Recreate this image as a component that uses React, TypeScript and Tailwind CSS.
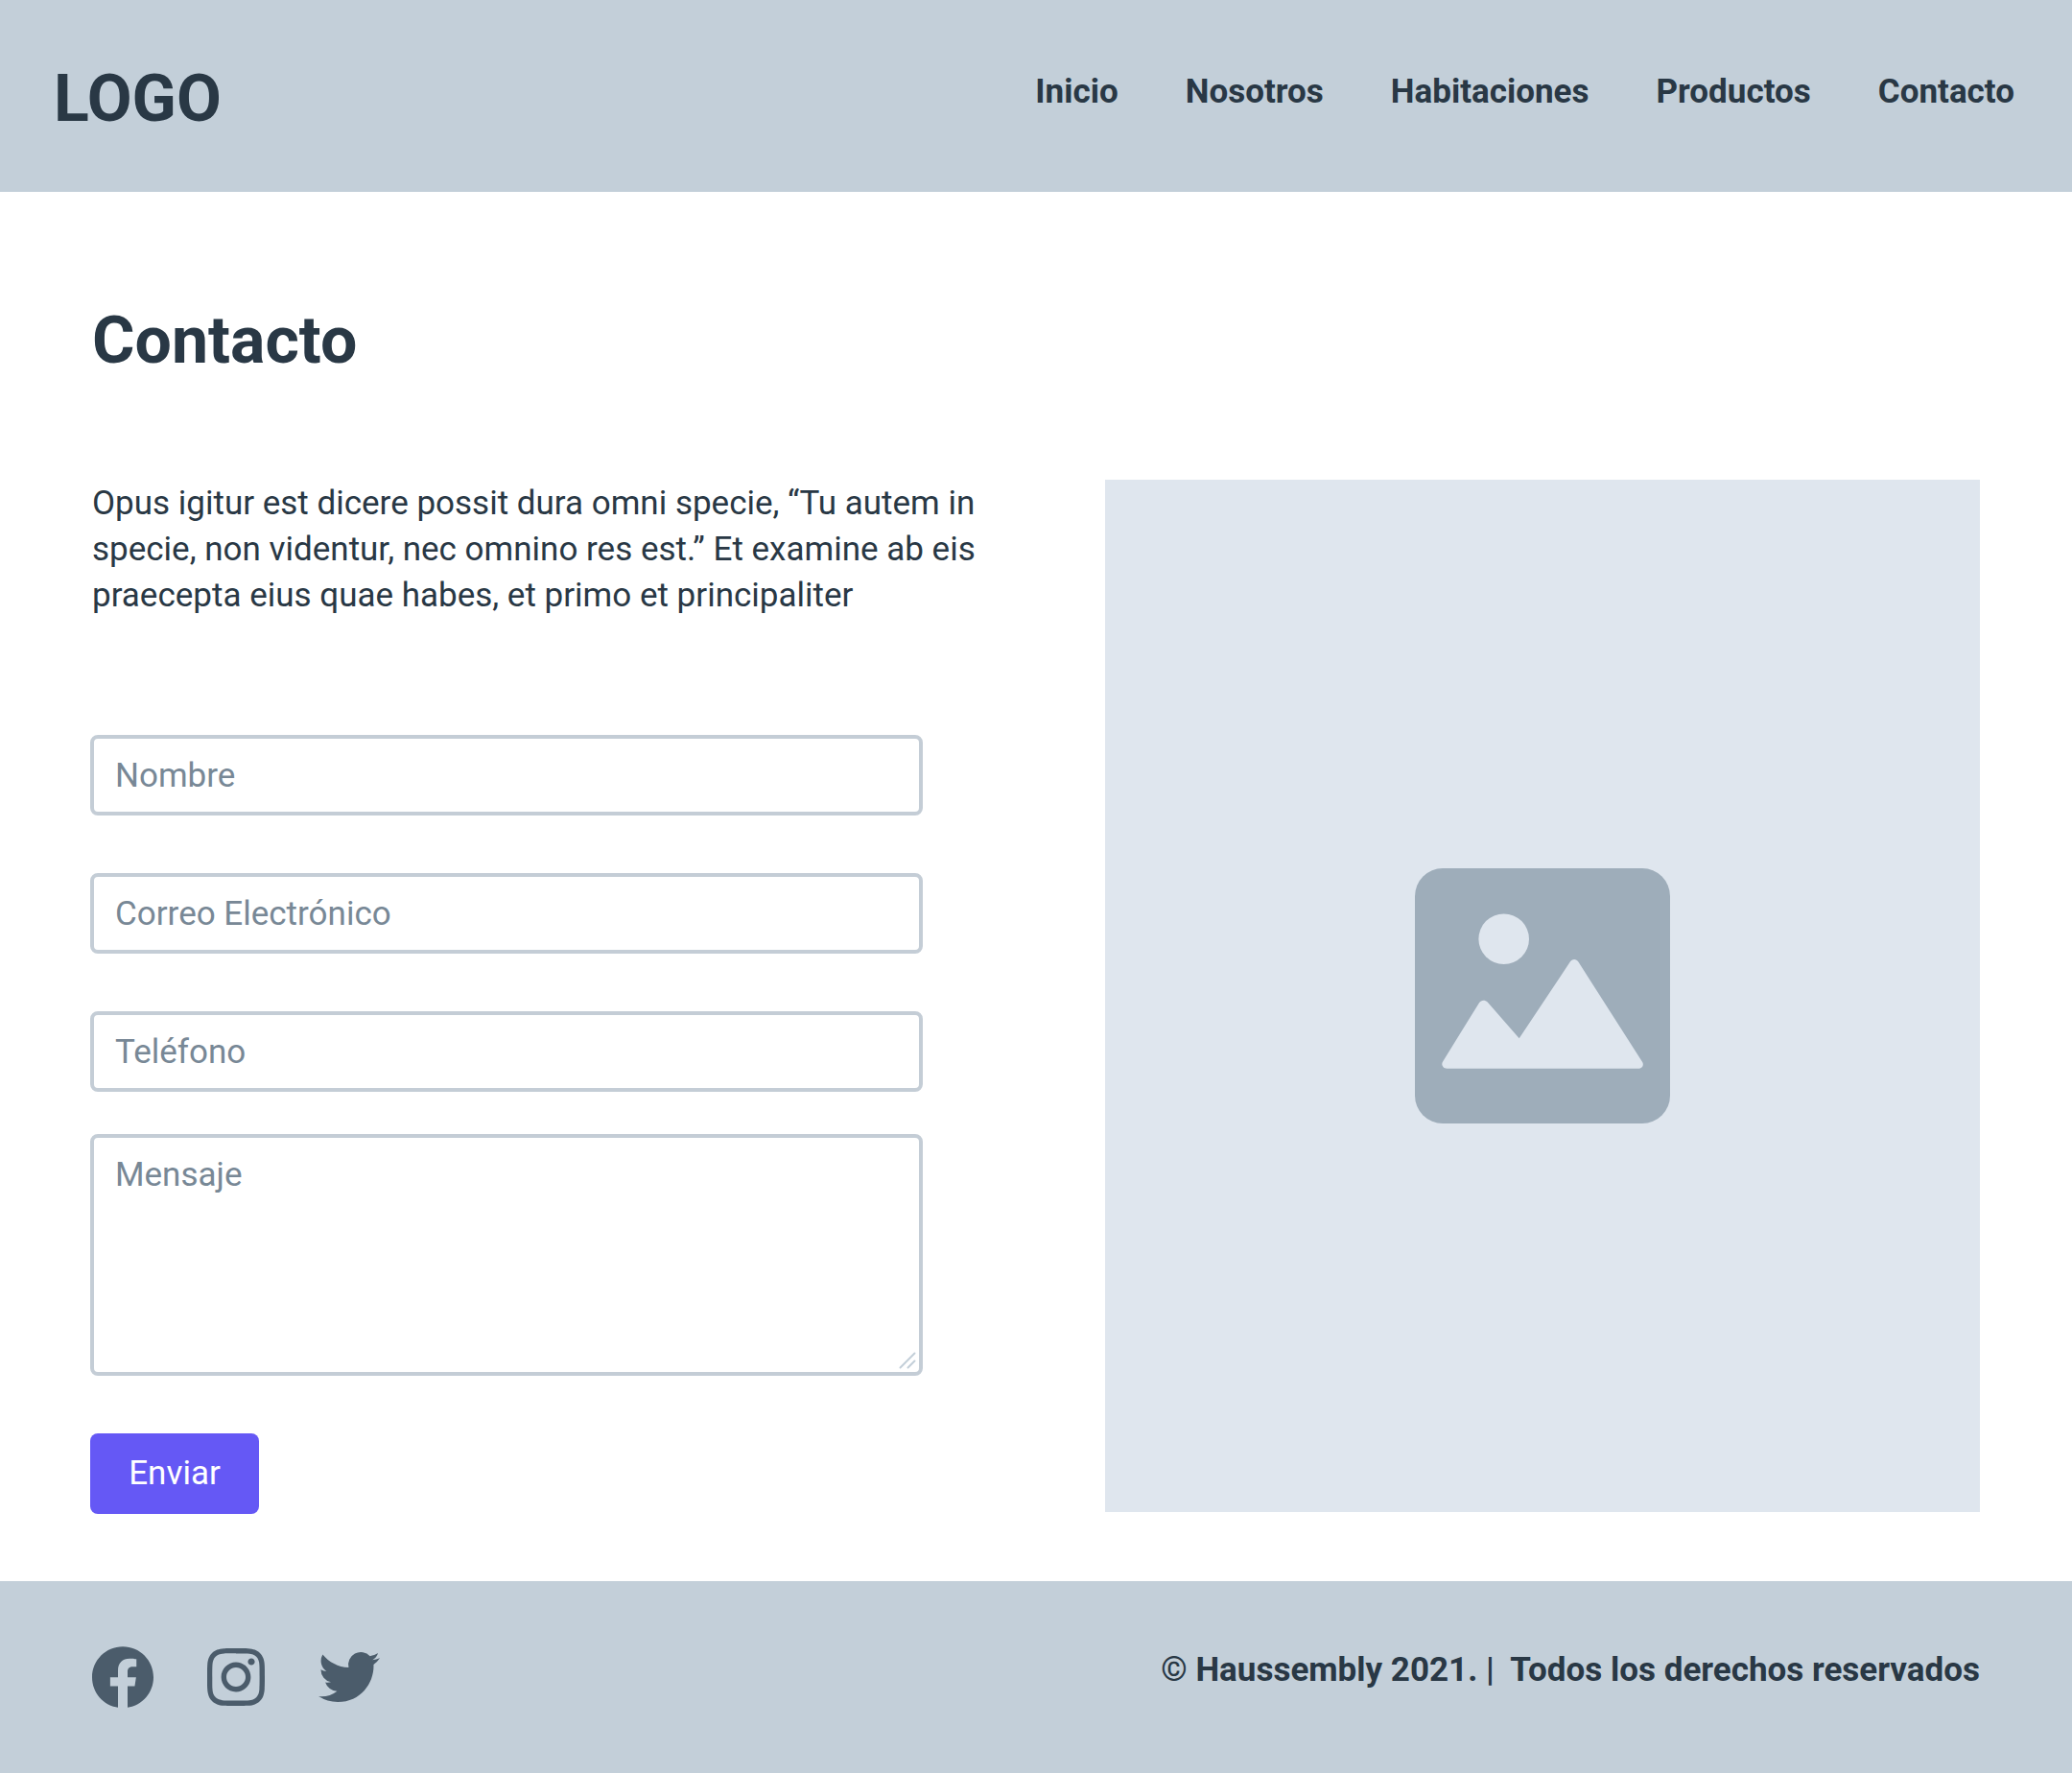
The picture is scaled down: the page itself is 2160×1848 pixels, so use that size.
const navItems = ["Inicio", "Nosotros", "Habitaciones", "Productos", "Contacto"];

const fields = [
  { id: "nombre", label: "Nombre", type: "text" },
  { id: "correo", label: "Correo Electrónico", type: "email" },
  { id: "telefono", label: "Teléfono", type: "tel" },
];

const socials = [
  {
    name: "Facebook",
    size: "size-16",
    path: "M24 12.073c0-6.627-5.373-12-12-12s-12 5.373-12 12c0 5.99 4.388 10.954 10.125 11.854v-8.385H7.078v-3.47h3.047V9.43c0-3.007 1.792-4.669 4.533-4.669 1.312 0 2.686.235 2.686.235v2.953H15.83c-1.491 0-1.956.925-1.956 1.874v2.25h3.328l-.532 3.47h-2.796v8.385C19.612 23.027 24 18.062 24 12.073z",
  },
  {
    name: "Instagram",
    size: "size-15",
    path: "M12 0C8.74 0 8.333.015 7.053.072 5.775.132 4.905.333 4.14.63c-.789.306-1.459.717-2.126 1.384S.935 3.35.63 4.14C.333 4.905.131 5.775.072 7.053.012 8.333 0 8.74 0 12s.015 3.667.072 4.947c.06 1.277.261 2.148.558 2.913.306.788.717 1.459 1.384 2.126.667.666 1.336 1.079 2.126 1.384.766.296 1.636.499 2.913.558C8.333 23.988 8.74 24 12 24s3.667-.015 4.947-.072c1.277-.06 2.148-.262 2.913-.558.788-.306 1.459-.718 2.126-1.384.666-.667 1.079-1.335 1.384-2.126.296-.765.499-1.636.558-2.913.06-1.28.072-1.687.072-4.947s-.015-3.667-.072-4.947c-.06-1.277-.262-2.149-.558-2.913-.306-.789-.718-1.459-1.384-2.126C21.319 1.347 20.651.935 19.86.63c-.765-.297-1.636-.499-2.913-.558C15.667.012 15.26 0 12 0zm0 2.16c3.203 0 3.585.016 4.85.071 1.17.055 1.805.249 2.227.415.562.217.96.477 1.382.896.419.42.679.819.896 1.381.164.422.36 1.057.413 2.227.057 1.266.07 1.646.07 4.85s-.015 3.585-.074 4.85c-.061 1.17-.256 1.805-.421 2.227-.224.562-.479.96-.899 1.382-.419.419-.824.679-1.38.896-.42.164-1.065.36-2.235.413-1.274.057-1.649.07-4.859.07-3.211 0-3.586-.015-4.859-.074-1.171-.061-1.816-.256-2.236-.421-.569-.224-.96-.479-1.379-.899-.421-.419-.69-.824-.9-1.38-.165-.42-.359-1.065-.42-2.235-.045-1.26-.061-1.649-.061-4.844 0-3.196.016-3.586.061-4.861.061-1.17.255-1.814.42-2.234.21-.57.479-.96.9-1.381.419-.419.81-.689 1.379-.898.42-.166 1.051-.361 2.221-.421 1.275-.045 1.65-.06 4.859-.06l.045.03zm0 3.678c-3.405 0-6.162 2.76-6.162 6.162 0 3.405 2.76 6.162 6.162 6.162 3.405 0 6.162-2.76 6.162-6.162 0-3.405-2.76-6.162-6.162-6.162zM12 16c-2.21 0-4-1.79-4-4s1.79-4 4-4 4 1.79 4 4-1.79 4-4 4zm7.846-10.405c0 .795-.646 1.44-1.44 1.44-.795 0-1.44-.646-1.44-1.44 0-.794.646-1.439 1.44-1.439.793-.001 1.44.645 1.44 1.439z",
  },
  {
    name: "Twitter",
    size: "size-16",
    path: "M23.953 4.57a10 10 0 01-2.825.775 4.958 4.958 0 002.163-2.723c-.951.555-2.005.959-3.127 1.184a4.92 4.92 0 00-8.384 4.482C7.69 8.095 4.067 6.13 1.64 3.162a4.822 4.822 0 00-.666 2.475c0 1.71.87 3.213 2.188 4.096a4.904 4.904 0 01-2.228-.616v.06a4.923 4.923 0 003.946 4.827 4.996 4.996 0 01-2.212.085 4.936 4.936 0 004.604 3.417 9.867 9.867 0 01-6.102 2.105c-.39 0-.779-.023-1.17-.067a13.995 13.995 0 007.557 2.209c9.053 0 13.998-7.496 13.998-13.985 0-.21 0-.42-.015-.63A9.935 9.935 0 0024 4.59z",
  },
];

function Header() {
  return (
    <header className="flex h-[200px] items-center justify-between bg-[#c3cfd9] pr-[60px] pl-14">
      <a href="#" className="pt-1.5 text-[68px] leading-[80px] font-bold">
        LOGO
      </a>
      <nav className="flex gap-[70px] pb-2 text-[35px] leading-12 font-bold">
        {navItems.map((item) => (
          <a key={item} href={`#${item.toLowerCase()}`}>
            {item}
          </a>
        ))}
      </nav>
    </header>
  );
}

function PicturePlaceholder() {
  return (
    <div className="mb-0.5 flex items-center justify-center bg-[#dfe6ee]">
      <svg viewBox="0 0 266 266" className="size-[266px]" role="img" aria-label="Imagen">
        <rect width="266" height="266" rx="29" fill="#9eadba" />
        <circle cx="92.7" cy="73.7" r="26.3" fill="#dfe6ee" />
        <path
          fill="#dfe6ee"
          d="M33.3 208.8C29.3 208.8 27 204.8 29.1 201.4L67 140.2C69 137 73.2 136.8 75.7 139.6L108.7 177.3L161.8 97.6C163.8 94.2 168.4 94.2 170.4 97.6L237 201.8C239.2 205.2 236.8 208.8 232.9 208.8Z"
        />
      </svg>
    </div>
  );
}

function ContactForm() {
  return (
    <form className="mt-[121px] flex max-w-[868px] flex-col" onSubmit={(e) => e.preventDefault()}>
      <div className="flex flex-col gap-15">
        {fields.map((f) => (
          <input
            key={f.id}
            id={f.id}
            name={f.id}
            type={f.type}
            aria-label={f.label}
            placeholder={f.label}
            className="h-21 rounded-lg border-4 border-[#c4cdd6] bg-white px-[22px] text-[35px] leading-12 outline-none placeholder:text-[#788896] placeholder:opacity-100"
          />
        ))}
      </div>
      <div className="relative mt-11 flex flex-col">
        <textarea
          id="mensaje"
          name="mensaje"
          aria-label="Mensaje"
          placeholder="Mensaje"
          className="h-[252px] resize-none rounded-lg border-4 border-[#c4cdd6] bg-white px-[22px] py-[15px] text-[35px] leading-12 outline-none placeholder:text-[#788896] placeholder:opacity-100"
        />
        <svg
          viewBox="0 0 18 18"
          className="pointer-events-none absolute right-[7px] bottom-[7px] size-[18px]"
          fill="none"
          stroke="#c3cfd9"
          strokeWidth="2"
          strokeLinecap="round"
          aria-hidden="true"
        >
          <path d="M1.5 16.5L16.5 1.5M9.5 16.5L16.5 9.5" />
        </svg>
      </div>
      <button
        type="submit"
        className="mt-15 h-21 w-44 rounded-lg bg-[#6558f5] text-[35px] leading-12 text-white"
      >
        Enviar
      </button>
    </form>
  );
}

function Footer() {
  return (
    <footer className="flex h-[200px] items-center justify-between bg-[#c3cfd9] px-24">
      <div className="flex items-center gap-14 text-[#4b5c6b]">
        {socials.map((s) => (
          <a key={s.name} href={`#${s.name.toLowerCase()}`} aria-label={s.name}>
            <svg viewBox="0 0 24 24" className={s.size} fill="currentColor" aria-hidden="true">
              <path d={s.path} />
            </svg>
          </a>
        ))}
      </div>
      <p className="pb-3.5 text-[35px] leading-12 font-bold">
        © Haussembly 2021. |{"\u00a0 "}Todos los derechos reservados
      </p>
    </footer>
  );
}

export default function App() {
  return (
    <div className="flex min-h-screen flex-col bg-white font-['Roboto',sans-serif] text-[#293845]">
      <Header />
      <main className="flex-1 pt-[115px] pr-24 pb-[70px] pl-[94px]">
        <h1 className="pl-0.5 text-[68px] leading-[80px] font-bold">Contacto</h1>
        <div className="mt-[105px] grid grid-cols-[20fr_19fr] gap-x-[98px]">
          <section>
            <p className="pt-px pl-0.5 text-[35px] leading-12">
              Opus igitur est dicere possit dura omni specie, “Tu autem in specie, non videntur,
              nec omnino res est.” Et examine ab eis praecepta eius quae habes, et primo et
              principaliter
            </p>
            <ContactForm />
          </section>
          <PicturePlaceholder />
        </div>
      </main>
      <Footer />
    </div>
  );
}
